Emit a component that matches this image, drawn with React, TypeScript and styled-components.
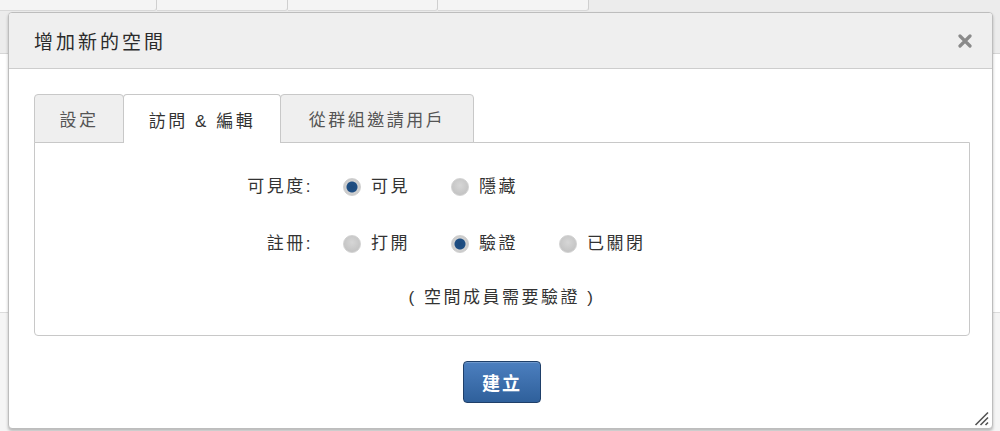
import React, { useState } from "react";
import styled, { createGlobalStyle } from "styled-components";

const GlobalStyle = createGlobalStyle`
  html, body {
    margin: 0;
    padding: 0;
    background: #ffffff;
  }
  body {
    font-family: "Liberation Sans", "Noto Sans CJK TC", sans-serif;
    color: #333;
  }
  * {
    box-sizing: border-box;
  }
`;

const Page = styled.div`
  position: relative;
  width: 1000px;
  height: 431px;
  overflow: hidden;
  display: flex;
  flex-direction: column;
  background: #fff;
`;

const TopBand = styled.div`
  height: 54px;
  flex-shrink: 0;
  background: #ececec;
  border-bottom: 1px solid #d6d6d6;
  display: flex;
  align-items: flex-start;
`;

const BackTab = styled.div<{ $w: number }>`
  width: ${(p) => p.$w}px;
  height: 11px;
  background: #f4f4f4;
  border-right: 1px solid #cfcfcf;
  border-bottom: 1px solid #d8d8d8;
  border-radius: 0 0 3px 0;
`;

const BackBody = styled.div`
  flex: 1;
  border-bottom: 1px solid #dcdcdc;
`;

const BackFooter = styled.div`
  height: 118px;
  flex-shrink: 0;
  background: #f5f5f5;
`;

const Modal = styled.div`
  position: absolute;
  left: 8px;
  top: 12px;
  width: 985px;
  height: 417px;
  background: #fff;
  border: 1px solid #bdbdbd;
  border-radius: 4px;
  box-shadow: 0 2px 3px rgba(0, 0, 0, 0.25);
  display: flex;
  flex-direction: column;
  overflow: hidden;
`;

const Header = styled.div`
  height: 56px;
  flex-shrink: 0;
  background: #efefef;
  border-bottom: 1px solid #cdcdcd;
  display: flex;
  align-items: center;
  justify-content: space-between;
  padding: 0 20px 0 25px;
`;

const Title = styled.h3`
  margin: 0;
  font-size: 19px;
  font-weight: normal;
  letter-spacing: 3px;
  color: #2b2b2b;
`;

const CloseButton = styled.button`
  border: none;
  background: transparent;
  padding: 0;
  width: 14px;
  height: 14px;
  display: flex;
  cursor: pointer;
`;

const Body = styled.div`
  flex: 1;
  padding: 25px 22px 0 25px;
  display: flex;
  flex-direction: column;
`;

const TabList = styled.div`
  display: flex;
  height: 48px;
  flex-shrink: 0;
`;

const Tab = styled.button<{ $active?: boolean; $w: number }>`
  width: ${(p) => p.$w}px;
  height: 49px;
  margin-right: -1px;
  border: 1px solid #c8c8c8;
  border-bottom: ${(p) => (p.$active ? "none" : "1px solid #c8c8c8")};
  border-radius: 4px 4px 0 0;
  background: ${(p) => (p.$active ? "#fff" : "#efefef")};
  position: relative;
  z-index: ${(p) => (p.$active ? 2 : 1)};
  font-family: inherit;
  font-size: 17px;
  letter-spacing: 2.5px;
  color: ${(p) => (p.$active ? "#333" : "#555")};
  padding: 0;
  cursor: pointer;
`;

const Panel = styled.div`
  height: 194px;
  flex-shrink: 0;
  border: 1px solid #c8c8c8;
  border-radius: 0 0 4px 4px;
  display: flex;
  flex-direction: column;
  padding-top: 32px;
`;

const FieldGrid = styled.div`
  display: grid;
  grid-template-columns: 278px auto;
  column-gap: 30px;
  row-gap: 33px;
  align-items: center;
`;

const FieldLabel = styled.div`
  text-align: right;
  font-size: 17px;
  letter-spacing: 2.5px;
  line-height: 24px;
  color: #333;
`;

const Options = styled.div`
  display: flex;
  gap: 41px;
`;

const Option = styled.label`
  display: flex;
  align-items: center;
  gap: 10px;
  font-size: 17px;
  letter-spacing: 2.5px;
  line-height: 24px;
  color: #333;
  cursor: pointer;
`;

const RadioDot = styled.span<{ $checked?: boolean }>`
  width: 18px;
  height: 18px;
  border-radius: 50%;
  background: ${(p) =>
    p.$checked
      ? "radial-gradient(circle, #1d4a7c 0, #1f4f84 5px, #d2d2d2 6px, #c4c4c4 9px)"
      : "radial-gradient(circle at 50% 40%, #d6d6d6 0, #c4c4c4 9px)"};
  border: 1px solid ${(p) => (p.$checked ? "#cfcfcf" : "#d2d2d2")};
`;

const Note = styled.div`
  margin-top: 30px;
  text-align: center;
  font-size: 17px;
  letter-spacing: 2.5px;
  line-height: 24px;
  color: #333;
`;

const Footer = styled.div`
  display: flex;
  justify-content: center;
  padding-top: 25px;
  position: relative;
  flex: 1;
`;

const PrimaryButton = styled.button`
  width: 78px;
  height: 42px;
  border: 1px solid #1f3f69;
  border-radius: 4px;
  background: linear-gradient(#4c7fbf, #2f609b);
  box-shadow: inset 0 1px 0 rgba(255, 255, 255, 0.2);
  color: #fff;
  font-family: inherit;
  font-size: 18px;
  font-weight: bold;
  letter-spacing: 2px;
  padding: 0;
  cursor: pointer;
`;

const ResizeGrip = styled.svg`
  position: absolute;
  right: -19px;
  bottom: 2px;
`;

const visibility = ["可見", "隱藏"];
const registration = ["打開", "驗證", "已關閉"];

const App: React.FC = () => {
  const [tab, setTab] = useState(1);
  const [visible, setVisible] = useState("可見");
  const [reg, setReg] = useState("驗證");

  const tabs = [
    { label: "設定", w: 90 },
    { label: "訪問 & 編輯", w: 158 },
    { label: "從群組邀請用戶", w: 194 },
  ];

  return (
    <>
      <GlobalStyle />
      <Page>
        <TopBand>
          <BackTab $w={157} />
          <BackTab $w={131} />
          <BackTab $w={150} />
          <BackTab $w={151} />
        </TopBand>
        <BackBody />
        <BackFooter />

        <Modal>
          <Header>
            <Title>增加新的空間</Title>
            <CloseButton aria-label="close">
              <svg width="14" height="14" viewBox="0 0 14 14">
                <path
                  d="M2 2 L12 12 M12 2 L2 12"
                  stroke="#8a8a8a"
                  strokeWidth="3.2"
                  strokeLinecap="round"
                />
              </svg>
            </CloseButton>
          </Header>
          <Body>
            <TabList>
              {tabs.map((t, i) => (
                <Tab
                  key={t.label}
                  $w={t.w}
                  $active={i === tab}
                  onClick={() => setTab(i)}
                >
                  {t.label}
                </Tab>
              ))}
            </TabList>
            <Panel>
              <FieldGrid>
                <FieldLabel>可見度:</FieldLabel>
                <Options>
                  {visibility.map((v) => (
                    <Option key={v} onClick={() => setVisible(v)}>
                      <RadioDot $checked={visible === v} />
                      {v}
                    </Option>
                  ))}
                </Options>
                <FieldLabel>註冊:</FieldLabel>
                <Options>
                  {registration.map((v) => (
                    <Option key={v} onClick={() => setReg(v)}>
                      <RadioDot $checked={reg === v} />
                      {v}
                    </Option>
                  ))}
                </Options>
              </FieldGrid>
              <Note>( 空間成員需要驗證 )</Note>
            </Panel>
            <Footer>
              <PrimaryButton>建立</PrimaryButton>
              <ResizeGrip width="15" height="15" viewBox="0 0 15 15">
                <path
                  d="M1.5 14 L14 1.5 M6.5 14 L14 6.5 M11.5 14 L14 11.5"
                  stroke="#555"
                  strokeWidth="1.6"
                />
              </ResizeGrip>
            </Footer>
          </Body>
        </Modal>
      </Page>
    </>
  );
};

export default App;
